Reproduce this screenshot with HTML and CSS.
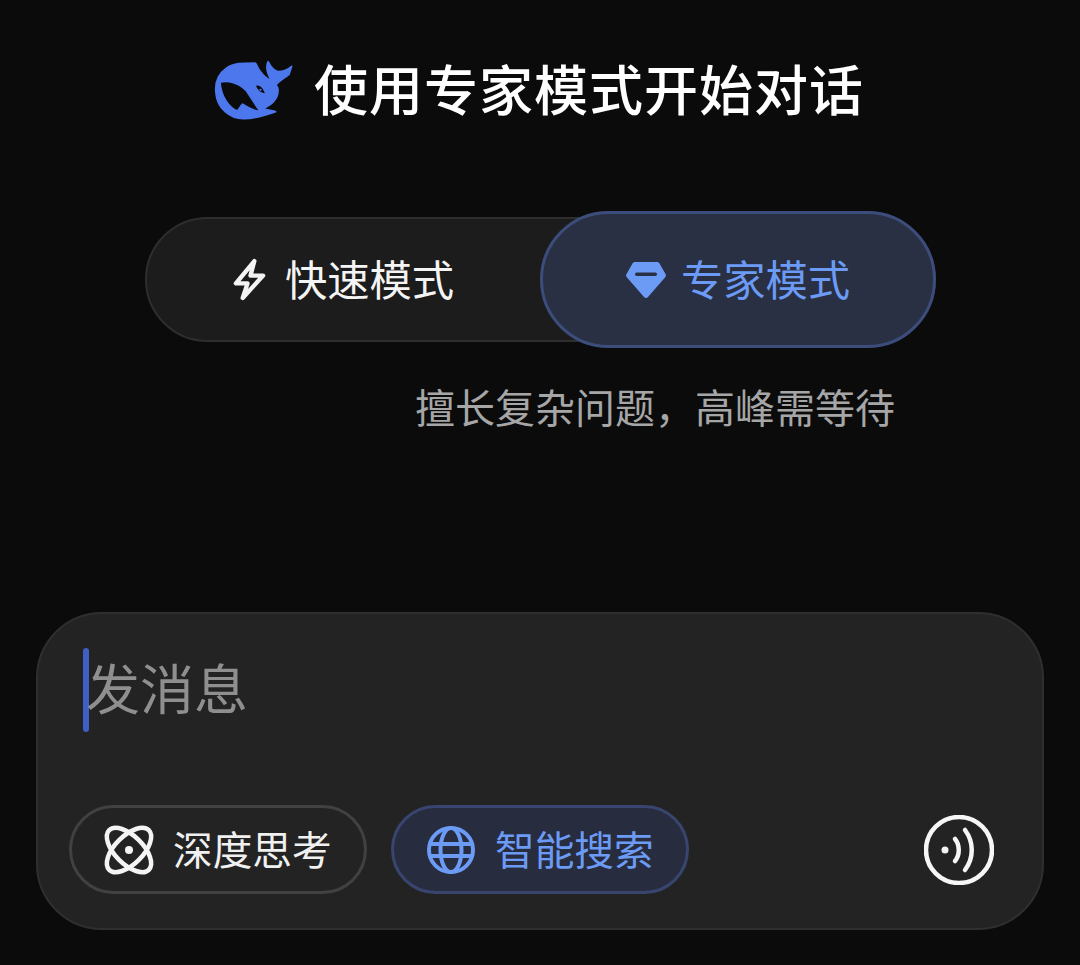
FILE: index.html
```html
<!DOCTYPE html>
<html lang="zh-CN">
<head>
<meta charset="utf-8">
<title>DeepSeek</title>
<link rel="stylesheet" href="styles.css">
</head>
<body>
<main class="page">
  <header class="title-row">
    <svg class="logo" viewBox="40 50 245 190" aria-hidden="true">
      <path class="logo-body logo-shape" fill-rule="evenodd" d="M165 62C130 62 100 62 80 77C52 97 44 125 48 155C52 198 90 230 130 230C165 231 195 220 228 209C215 205 200 205 190 198C215 190 235 170 235 145C235 138 233 132 228 130C232 120 245 112 268 97L276 72C265 82 250 88 235 88C222 85 212 72 205 58C197 75 205 100 218 120C200 108 180 95 168 64ZM60 120C85 113 117 123 137 143C152 163 167 190 182 209C165 207 145 197 128 186C122 192 118 200 112 207C88 197 63 165 60 120Z"/>
      <path class="logo-eye" d="M169 131C178 127 189 136 195 153C185 153 173 145 169 131Z"/>
      <circle class="logo-body" cx="182" cy="143" r="3.500"/>
    </svg>
    <h1 class="title">使用专家模式开始对话</h1>
  </header>

  <div class="mode-toggle">
    <div class="mode mode-fast">
      <svg class="icon-bolt" viewBox="0 0 34 44" aria-hidden="true">
        <path d="M22 3L3 26H15L10 41L31 18H18Z"/>
      </svg>
      <span class="lift">快速模式</span>
    </div>
    <div class="mode mode-expert">
      <svg class="icon-gem" viewBox="0 0 40 36" aria-hidden="true">
        <path class="gem-fill" d="M9 0H31C32 0 33 .5 33.500 1.500L39.500 12C40.200 13.200 40 14.500 39 15.500L22 35C21 36.200 19 36.200 18 35L1 15.500C0 14.500-.2 13.200.5 12L6.500 1.500C7 .5 8 0 9 0Z"/>
        <rect class="gem-bar" x="9" y="10.500" width="22" height="3.500" rx="1.700"/>
      </svg>
      <span class="lift">专家模式</span>
    </div>
  </div>

  <p class="hint">擅长复杂问题，高峰需等待</p>

  <section class="composer">
    <div class="input-line">
      <span class="caret"></span>
      <span class="placeholder">发消息</span>
    </div>
    <div class="actions">
      <div class="chip">
        <svg class="chip-icon" viewBox="0 0 48 48" aria-hidden="true">
          <ellipse cx="24" cy="24" rx="28" ry="14" transform="rotate(45 24 24)"/>
          <ellipse cx="24" cy="24" rx="28" ry="14" transform="rotate(-45 24 24)"/>
          <circle class="dot-white" cx="24" cy="24" r="4"/>
        </svg>
        <span class="lift">深度思考</span>
      </div>
      <div class="chip chip-active">
        <svg class="chip-icon" viewBox="0 0 48 48" aria-hidden="true">
          <circle cx="24" cy="24" r="22"/>
          <ellipse cx="24" cy="24" rx="10.500" ry="22"/>
          <path d="M3 18H45M3 30H45"/>
        </svg>
        <span class="lift">智能搜索</span>
      </div>
      <svg class="voice" viewBox="0 0 70 70" aria-hidden="true">
        <circle cx="35" cy="35" r="33"/>
        <circle class="dot-white" cx="21" cy="35" r="3.500"/>
        <path d="M31 24C36 30 36 40 31 46"/>
        <path d="M41 15C50 27 50 43 41 55"/>
      </svg>
    </div>
  </section>
</main>
</body>
</html>
```
FILE: styles.css
```css
* { box-sizing: border-box; }

html, body {
  margin: 0;
  height: 100%;
  background: #0b0b0c;
}

body {
  font-family: "Noto Sans CJK SC", "Noto Sans", sans-serif;
  overflow: hidden;
}

.page {
  width: 1080px;
  height: 965px;
  display: flex;
  flex-direction: column;
}

.lift { padding-bottom: 4px; }

.title-row {
  display: flex;
  align-items: center;
  gap: 19px;
  height: 64px;
  margin-top: 58px;
  padding-left: 213px;
}

.logo { width: 82px; height: 63px; flex: none; }
.logo-body { fill: #4d77ec; }
.logo-shape {
  stroke: #4d77ec;
  stroke-width: 5;
  stroke-linejoin: round;
}
.logo-eye { fill: #0b0b0c; }

.title {
  margin: 0;
  padding-bottom: 4px;
  font-size: 54px;
  line-height: 64px;
  font-weight: 500;
  letter-spacing: 1px;
  color: #fff;
  white-space: nowrap;
}

.mode-toggle {
  display: flex;
  align-items: center;
  width: 791px;
  height: 125px;
  margin: 95px 0 0 145px;
  border: 2px solid #2e2e2f;
  border-radius: 63px;
  background: #1c1c1d;
}

.mode {
  display: flex;
  align-items: center;
  justify-content: center;
  flex: none;
  font-size: 42.300px;
  line-height: 60px;
  white-space: nowrap;
}

.mode-fast {
  width: 393px;
  gap: 19px;
  color: #f4f4f4;
}

.mode-expert {
  width: 396px;
  height: 137px;
  gap: 15px;
  border: 3px solid #3c4d7c;
  border-radius: 69px;
  background: #2a3043;
  color: #6c9bf5;
}

.icon-bolt { width: 33px; height: 43px; flex: none; }
.icon-bolt path {
  fill: none;
  stroke: #f4f4f4;
  stroke-width: 4.500;
  stroke-linejoin: round;
}

.icon-gem { width: 40px; height: 36px; flex: none; }
.gem-fill { fill: #6c9bf5; }
.gem-bar { fill: #2a3043; }

.hint {
  margin: 36px 0 0 415px;
  padding-bottom: 2px;
  font-size: 40px;
  line-height: 56px;
  color: #a6a6a6;
  white-space: nowrap;
}

.composer {
  display: flex;
  flex-direction: column;
  justify-content: space-between;
  width: 1008px;
  height: 318px;
  margin: 176px 0 0 36px;
  padding: 34px 48px 34px 31px;
  border: 2px solid #2f2f2f;
  border-radius: 66px;
  background: #232323;
}

.input-line {
  display: flex;
  align-items: center;
  height: 84px;
  padding-left: 14px;
}

.caret {
  width: 6px;
  height: 84px;
  border-radius: 3px;
  background: #3f5fc4;
  flex: none;
}

.placeholder {
  margin-left: -3px;
  padding-bottom: 6px;
  font-size: 54px;
  line-height: 84px;
  color: #8f8f8f;
}

.actions {
  display: flex;
  align-items: center;
  gap: 24px;
}

.chip {
  display: flex;
  align-items: center;
  gap: 20px;
  width: 298px;
  height: 89px;
  padding-left: 33px;
  border: 3px solid #414141;
  border-radius: 45px;
  font-size: 39.700px;
  line-height: 56px;
  color: #f0f0f0;
  white-space: nowrap;
}

.chip-active {
  border-color: #38466f;
  background: #272c3f;
  color: #6c9bf5;
}

.chip-icon {
  width: 48px;
  height: 48px;
  flex: none;
  overflow: visible;
  fill: none;
  stroke: #f4f4f4;
  stroke-width: 4.500;
}

.chip-active .chip-icon { stroke: #6c9bf5; stroke-width: 4; }

.dot-white { fill: #f4f4f4; stroke: none; }

.voice {
  width: 70px;
  height: 70px;
  margin-left: auto;
  flex: none;
  fill: none;
  stroke: #f6f6f6;
  stroke-width: 4.500;
  stroke-linecap: round;
}
```
